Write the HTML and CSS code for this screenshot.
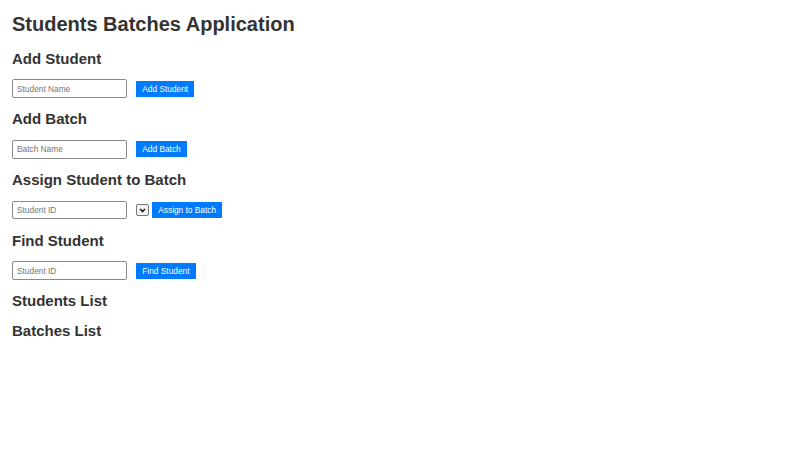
FILE: index.html
```html
<!DOCTYPE html>
<html>
<head>
<meta charset="utf-8">
<title>Students Batches Application</title>
<link rel="stylesheet" href="styles.css">
</head>
<body>
<div class="app">
  <h1 class="title">Students Batches Application</h1>

  <h2 class="heading">Add Student</h2>
  <div class="row">
    <input class="field" type="text" placeholder="Student Name">
    <button class="btn">Add Student</button>
  </div>

  <h2 class="heading">Add Batch</h2>
  <div class="row">
    <input class="field" type="text" placeholder="Batch Name">
    <button class="btn">Add Batch</button>
  </div>

  <h2 class="heading">Assign Student to Batch</h2>
  <div class="row">
    <input class="field" type="text" placeholder="Student ID">
    <select class="picker"></select>
    <button class="btn">Assign to Batch</button>
  </div>

  <h2 class="heading">Find Student</h2>
  <div class="row">
    <input class="field" type="text" placeholder="Student ID">
    <button class="btn">Find Student</button>
  </div>

  <h2 class="heading">Students List</h2>
  <h2 class="heading">Batches List</h2>
</div>
</body>
</html>
```
FILE: styles.css
```css
html, body {
  margin: 0;
  padding: 0;
  background: #ffffff;
}
.app {
  padding: 0.1px 12px 0 12px;
  font-family: "Liberation Sans", Arial, sans-serif;
  color: #333333;
}
.title {
  font-size: 20px;
  line-height: 23px;
  font-weight: bold;
  margin: 13.3px 0;
}
.heading {
  font-size: 15px;
  line-height: 17.25px;
  font-weight: bold;
  margin: 12.45px 0;
}
.row {
  display: flex;
  align-items: center;
  height: 18.5px;
}
.field {
  box-sizing: border-box;
  width: 115px;
  height: 18.5px;
  padding: 0 4px;
  border: 1px solid #8a8a8a;
  border-radius: 2px;
  font-family: "Liberation Sans", Arial, sans-serif;
  font-size: 8.33px;
  color: #333;
  margin: 0 9px 0 0;
  outline: none;
}
.field::placeholder {
  color: #757575;
}
.picker {
  -webkit-appearance: none;
  appearance: none;
  box-sizing: border-box;
  width: 13px;
  height: 12px;
  margin: 0 3px 0 0;
  padding: 0;
  border: 1px solid #767676;
  border-radius: 2px;
  background-color: #f4f4f4;
  background-image: url("data:image/svg+xml;utf8,<svg xmlns='http://www.w3.org/2000/svg' width='11' height='10' viewBox='0 0 11 10'><path d='M3 4 L5.5 6.5 L8 4' fill='none' stroke='%23222' stroke-width='1.6'/></svg>");
  background-repeat: no-repeat;
  background-position: center;
}
.btn {
  box-sizing: border-box;
  height: 16px;
  padding: 0 6.25px;
  border: none;
  border-radius: 0;
  background: #007bff;
  color: #ffffff;
  font-family: "Liberation Sans", Arial, sans-serif;
  font-size: 8.33px;
  line-height: 16px;
  cursor: pointer;
}
```
